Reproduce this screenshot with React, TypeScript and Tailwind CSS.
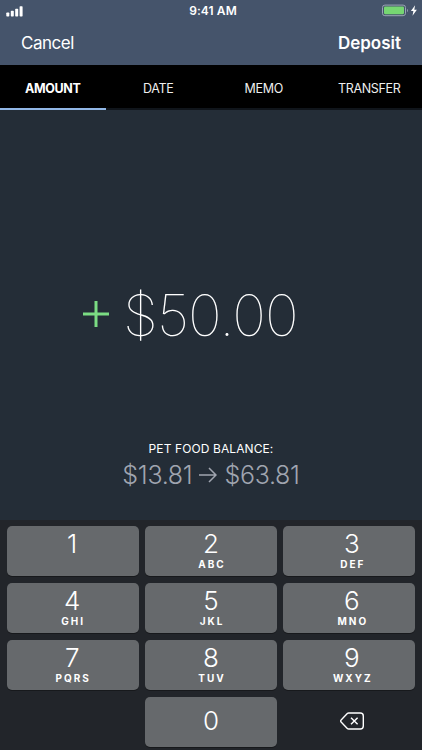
import React, { useState } from "react"

const tabs = ["AMOUNT", "DATE", "MEMO", "TRANSFER"]

const keys = [
  { digit: "1", letters: "" },
  { digit: "2", letters: "ABC" },
  { digit: "3", letters: "DEF" },
  { digit: "4", letters: "GHI" },
  { digit: "5", letters: "JKL" },
  { digit: "6", letters: "MNO" },
  { digit: "7", letters: "PQRS" },
  { digit: "8", letters: "TUV" },
  { digit: "9", letters: "WXYZ" },
]

function StatusBar() {
  return (
    <div className="grid h-[22px] grid-cols-3 items-center px-[6px]">
      <svg width="17" height="11" viewBox="0 0 17 11" fill="#fff">
        <rect x="0.3" y="6.5" width="3" height="4" rx="0.7" />
        <rect x="4.8" y="4.8" width="3" height="5.7" rx="0.7" />
        <rect x="9.2" y="2.8" width="3" height="7.7" rx="0.7" />
        <rect x="13.6" y="0.3" width="3" height="10.2" rx="0.7" />
      </svg>
      <div className="pl-[4px] text-center text-[12px] leading-[22px] font-semibold tracking-[0.1px]">9:41 AM</div>
      <svg className="-mr-[2px] mb-[1px] justify-self-end" width="36" height="13" viewBox="0 0 36 13">
        <rect x="0.5" y="1.1" width="23" height="10.6" rx="2.4" fill="none" stroke="#9aa5b4" />
        <rect x="2" y="2.6" width="20" height="7.6" rx="1.1" fill="#76d672" />
        <path d="M25 4.9c1.2.4 1.2 2.6 0 3z" fill="#9aa5b4" />
        <path d="M33.1 1.2 28.9 7h2.5l-.9 4.8 4.4-6.1h-2.6z" fill="#fff" />
      </svg>
    </div>
  )
}

function Tabs() {
  const [active, setActive] = useState("AMOUNT")

  return (
    <div className="grid h-[45px] grid-cols-4 bg-black">
      {tabs.map((tab) => (
        <button
          key={tab}
          onClick={() => setActive(tab)}
          className={
            tab === active
              ? "border-b-2 border-[#91b7e6] pt-[5px] text-[12.5px] font-bold tracking-[-0.35px]"
              : "border-b-2 border-[#10151b] pt-[5px] text-[12.5px] tracking-[-0.35px] text-[#eeeeee]"
          }
        >
          {tab}
        </button>
      ))}
    </div>
  )
}

function Key({ digit, letters }: { digit: string; letters: string }) {
  return (
    <button className="flex flex-col items-center rounded-[5px] bg-[#66696c] shadow-[0_1px_0_#17191c] nth-[3n]:pl-[5px] nth-[3n+1]:pr-[1px]">
      <span className="mt-[4px] text-[26px] leading-[28px] font-[350]">{digit}</span>
      <span className="-mr-[2px] text-[10px] leading-[12px] font-bold tracking-[2px]">{letters}</span>
    </button>
  )
}

function App() {
  return (
    <div className="flex h-[750px] w-[422px] flex-col overflow-hidden bg-[#242d37] font-['Inter',sans-serif] text-white">
      <header className="h-[65px] bg-[#45546b]">
        <StatusBar />
        <div className="flex h-[43px] items-center justify-between px-[21px] text-[17px]">
          <button className="tracking-[-0.5px]">Cancel</button>
          <button className="font-semibold">Deposit</button>
        </div>
      </header>
      <Tabs />

      <main className="flex h-[410px] flex-col items-center">
        <div className="mt-[170px] flex h-[72px] w-full items-center pl-[83px]">
          <svg className="mb-[4px]" width="26" height="26" viewBox="0 0 26 26" stroke="#7bdc83" strokeWidth="3">
            <path d="M13 0v26M0 13h26" />
          </svg>
          <span className="ml-[14px] text-[57px] leading-[72px] font-[120] tracking-[-1px]">$50.00</span>
        </div>
        <div className="mt-[89px] text-[12px] leading-[16px] tracking-[0.1px]">PET FOOD BALANCE:</div>
        <div className="mt-[2px] flex items-center text-[25px] leading-[32px] font-light tracking-[-0.3px] text-[#a0a5b0]">
          <span>$13.81</span>
          <svg className="mx-[7px]" width="18" height="16" viewBox="0 0 18 16" fill="none" stroke="#a0a5b0" strokeWidth="1.5">
            <path d="M0 8h16.5M10 1 17 8l-7 7" />
          </svg>
          <span>$63.81</span>
        </div>
      </main>

      <div className="grid h-[230px] auto-rows-[50px] grid-cols-3 gap-x-[6px] gap-y-[7px] bg-[#22252a] px-[6.5px] pt-[6px]">
        {keys.map((key) => (
          <Key key={key.digit} digit={key.digit} letters={key.letters} />
        ))}
        <div></div>
        <button className="rounded-[5px] bg-[#66696c] pb-[4px] text-[26px] font-[350] shadow-[0_1px_0_#17191c]">0</button>
        <button className="flex items-center justify-center pb-[3px] pl-[6px]" aria-label="Delete">
          <svg width="24" height="18" viewBox="0 0 24 18" fill="none" stroke="#fff" strokeWidth="1.4" strokeLinejoin="round">
            <path d="M8.7 1h11.6a3 3 0 0 1 3 3v10a3 3 0 0 1-3 3H8.7a2 2 0 0 1-1.4-.6L1.1 10a1.4 1.4 0 0 1 0-2l6.2-6.4A2 2 0 0 1 8.7 1z" />
            <path d="m11 5.7 6.6 6.6m0-6.6L11 12.3" />
          </svg>
        </button>
      </div>
    </div>
  )
}

export default App
